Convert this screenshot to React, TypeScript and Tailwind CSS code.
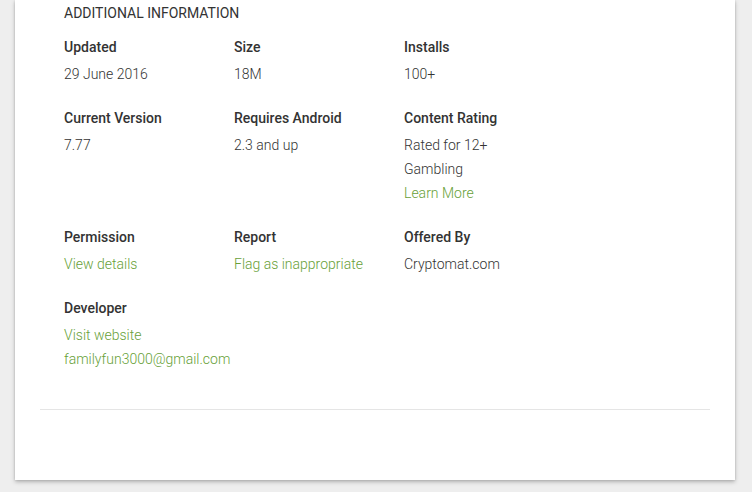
import React from 'react';

type Cell = {
  label: string;
  values: { text: string; link?: boolean }[];
};

const cells: Cell[] = [
  { label: 'Updated', values: [{ text: '29 June 2016' }] },
  { label: 'Size', values: [{ text: '18M' }] },
  { label: 'Installs', values: [{ text: '100+' }] },
  { label: 'Current Version', values: [{ text: '7.77' }] },
  { label: 'Requires Android', values: [{ text: '2.3 and up' }] },
  {
    label: 'Content Rating',
    values: [{ text: 'Rated for 12+' }, { text: 'Gambling' }, { text: 'Learn More', link: true }],
  },
  { label: 'Permission', values: [{ text: 'View details', link: true }] },
  { label: 'Report', values: [{ text: 'Flag as inappropriate', link: true }] },
  { label: 'Offered By', values: [{ text: 'Cryptomat.com' }] },
  {
    label: 'Developer',
    values: [
      { text: 'Visit website', link: true },
      { text: 'familyfun3000@gmail.com', link: true },
    ],
  },
];

export default function App() {
  return (
    <div
      className="min-h-screen bg-[#eeeeee] pl-[15px] pr-[17px] pb-[12px]"
      style={{ fontFamily: 'Roboto, "Noto Sans", sans-serif' }}
    >
      <div className="h-[480px] bg-white shadow-[0_2px_4px_rgba(0,0,0,0.25),0_0_2px_rgba(0,0,0,0.12)] px-[25px] pt-[3px]">
        {/* Additional information */}
        <div className="pl-[24px]">
          <h2 className="text-[14px] leading-[20px] font-normal text-[#333333] uppercase">
            Additional Information
          </h2>

          <div className="mt-[14px] grid grid-cols-[170px_170px_170px] gap-y-[22px]">
            {cells.map((cell) => (
              <div key={cell.label}>
                <div className="text-[14px] leading-[20px] font-medium text-[#333333]">{cell.label}</div>
                <div className="mt-[5px]">
                  {cell.values.map((v) => (
                    <div
                      key={v.text}
                      className={`text-[14px] leading-[24px] font-light ${
                        v.link ? 'text-[#689f38]' : 'text-[#333333]'
                      }`}
                    >
                      {v.text}
                    </div>
                  ))}
                </div>
              </div>
            ))}
          </div>
        </div>

        {/* Divider */}
        <div className="mt-[38px] border-t border-[#e5e5e5]" />
      </div>
    </div>
  );
}
